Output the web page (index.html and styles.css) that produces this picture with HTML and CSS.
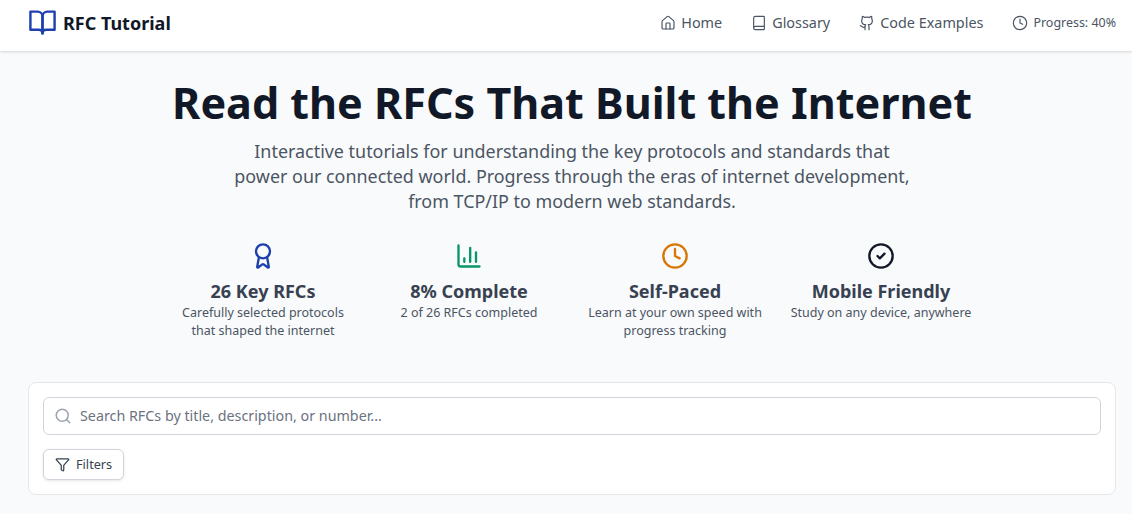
FILE: index.html
```html
<!DOCTYPE html>
<html lang="en">
<head>
<meta charset="utf-8">
<title>RFC Tutorial</title>
<link rel="stylesheet" href="styles.css">
</head>
<body>
<header class="nav">
  <a class="brand" href="#">
    <svg class="brand-icon" viewBox="0 0 24 24"><path d="M2 3h6a4 4 0 0 1 4 4v14a3 3 0 0 0-3-3H2z"/><path d="M22 3h-6a4 4 0 0 0-4 4v14a3 3 0 0 1 3-3h7z"/></svg>
    <span>RFC Tutorial</span>
  </a>
  <nav class="links">
    <a class="link" href="#"><svg class="ico" viewBox="0 0 24 24"><path d="M15 21v-8a1 1 0 0 0-1-1h-4a1 1 0 0 0-1 1v8"/><path d="M3 10a2 2 0 0 1 .709-1.528l7-5.999a2 2 0 0 1 2.582 0l7 5.999A2 2 0 0 1 21 10v9a2 2 0 0 1-2 2H5a2 2 0 0 1-2-2z"/></svg>Home</a>
    <a class="link" href="#"><svg class="ico" viewBox="0 0 24 24"><path d="M4 19.5v-15A2.5 2.5 0 0 1 6.5 2H19a1 1 0 0 1 1 1v18a1 1 0 0 1-1 1H6.5a1 1 0 0 1 0-5H20"/></svg>Glossary</a>
    <a class="link" href="#"><svg class="ico" viewBox="0 0 24 24"><path d="M15 22v-4a4.8 4.8 0 0 0-1-3.500c3 0 6-2 6-5.500.08-1.250-.27-2.480-1-3.500.28-1.150.28-2.350 0-3.500 0 0-1 0-3 1.500-2.640-.5-5.360-.5-8 0C6 2 5 2 5 2c-.3 1.150-.3 2.350 0 3.500A5.403 5.403 0 0 0 4 9c0 3.500 3 5.500 6 5.500-.39.49-.68 1.050-.85 1.650-.17.600-.22 1.230-.15 1.850v4"/><path d="M9 18c-4.510 2-5-2-7-2"/></svg>Code Examples</a>
    <span class="progress"><svg class="ico" viewBox="0 0 24 24"><circle cx="12" cy="12" r="10"/><polyline points="12 6 12 12 16 14"/></svg>Progress: 40%</span>
  </nav>
</header>
<main class="page">
  <section class="hero">
    <h1>Read the RFCs That Built the Internet</h1>
    <p class="lead">Interactive tutorials for understanding the key protocols and standards that power our connected world. Progress through the eras of internet development, from TCP/IP to modern web standards.</p>
    <div class="stats">
      <div class="stat">
        <svg class="stat-icon blue" viewBox="0 0 24 24"><path d="m15.477 12.890 1.515 8.526a.5.5 0 0 1-.81.470l-3.580-2.687a1 1 0 0 0-1.197 0l-3.586 2.686a.5.5 0 0 1-.810-.469l1.514-8.526"/><circle cx="12" cy="8" r="6"/></svg>
        <h3>26 Key RFCs</h3>
        <p>Carefully selected protocols that shaped the internet</p>
      </div>
      <div class="stat">
        <svg class="stat-icon green" viewBox="0 0 24 24"><path d="M3 3v16a2 2 0 0 0 2 2h16"/><path d="M18 17V9"/><path d="M13 17V5"/><path d="M8 17v-3"/></svg>
        <h3>8% Complete</h3>
        <p>2 of 26 RFCs completed</p>
      </div>
      <div class="stat">
        <svg class="stat-icon orange" viewBox="0 0 24 24"><circle cx="12" cy="12" r="10"/><polyline points="12 6 12 12 16 14"/></svg>
        <h3>Self-Paced</h3>
        <p>Learn at your own speed with progress tracking</p>
      </div>
      <div class="stat">
        <svg class="stat-icon dark" viewBox="0 0 24 24"><circle cx="12" cy="12" r="10"/><path d="m9 12 2 2 4-4"/></svg>
        <h3>Mobile Friendly</h3>
        <p>Study on any device, anywhere</p>
      </div>
    </div>
  </section>
  <section class="card">
    <label class="search">
      <svg class="search-icon" viewBox="0 0 24 24"><path d="m21 21-4.340-4.340"/><circle cx="11" cy="11" r="8"/></svg>
      <input type="text" placeholder="Search RFCs by title, description, or number...">
    </label>
    <button class="filters" type="button"><svg class="filter-icon" viewBox="0 0 24 24"><path d="M10 20a1 1 0 0 0 .553.895l2 1A1 1 0 0 0 14 21v-7a2 2 0 0 1 .517-1.341L21.740 4.670A1 1 0 0 0 21 3H3a1 1 0 0 0-.742 1.670l7.225 7.989A2 2 0 0 1 10 14z"/></svg>Filters</button>
  </section>
</main>
</body>
</html>
```
FILE: styles.css
```css
* { box-sizing: border-box; }
html, body { margin: 0; padding: 0; }
body {
  height: 514px;
  overflow: hidden;
  background: #f9fafb;
  color: #111827;
  font-family: "Noto Sans", sans-serif;
}
svg { fill: none; stroke: currentColor; stroke-width: 2; stroke-linecap: round; stroke-linejoin: round; flex: none; display: block; }
a { text-decoration: none; color: inherit; }

.nav {
  height: 51px;
  background: #fff;
  box-shadow: 0 1px 3px rgba(0, 0, 0, 0.1), 0 1px 2px rgba(0, 0, 0, 0.06);
  display: flex;
  align-items: center;
  justify-content: space-between;
  padding: 0 16px 6px 28px;
}
.brand { display: flex; align-items: center; gap: 6px; font-size: 18px; font-weight: 700; color: #111827; }
.brand-icon { width: 29px; height: 29px; color: #1e40af; }
.links { display: flex; align-items: center; gap: 29px; color: #4b5563; font-size: 14.4px; }
.link, .progress { display: flex; align-items: center; gap: 5px; }
.progress { font-size: 12.45px; }
.ico { width: 16px; height: 16px; stroke-width: 1.75; }

.page { padding: 1px 16px 0 28px; }
.hero { text-align: center; padding-top: 24px; }
h1 { margin: 0; font-size: 43.1px; line-height: 54px; font-weight: 700; color: #111827; }
.lead { margin: 9px auto 0; width: 680px; font-size: 17.92px; line-height: 25px; color: #4b5563; }
.stats { margin: 28px auto 0; width: 800px; display: grid; grid-template-columns: repeat(4, 1fr); column-gap: 24px; }
.stat { display: flex; flex-direction: column; align-items: center; height: 140px; }
.stat-icon { width: 28px; height: 28px; }
.blue { color: #1e40af; }
.green { color: #059669; }
.orange { color: #d97706; }
.dark { color: #111827; }
.stat h3 { margin: 9px 0 0; font-size: 18px; line-height: 24px; font-weight: 700; color: #374151; }
.stat p { margin: 1px 0 0; font-size: 12.5px; line-height: 18px; color: #4b5563; }

.card {
  height: 113px;
  background: #fff;
  border: 1px solid #e5e7eb;
  border-radius: 8px;
  padding: 14px;
}
.search { position: relative; display: block; }
.search-icon { position: absolute; left: 11px; top: 10px; width: 18px; height: 18px; color: #9ca3af; }
.search input {
  display: block;
  width: 100%;
  height: 38px;
  border: 1px solid #d1d5db;
  border-radius: 6px;
  padding: 0 12px 2px 36px;
  font: 14.3px "Noto Sans", sans-serif;
  background: #fff;
  outline: none;
}
.search input::placeholder { color: #6b7280; opacity: 1; }
.filters {
  margin-top: 14px;
  height: 31px;
  display: flex;
  align-items: center;
  gap: 6px;
  padding: 0 11px 1px;
  background: #fff;
  border: 1px solid #d1d5db;
  border-radius: 6px;
  box-shadow: 0 1px 3px rgba(0, 0, 0, 0.1);
  font: 12.7px "Noto Sans", sans-serif;
  color: #374151;
}
.filter-icon { width: 15px; height: 15px; }
```
